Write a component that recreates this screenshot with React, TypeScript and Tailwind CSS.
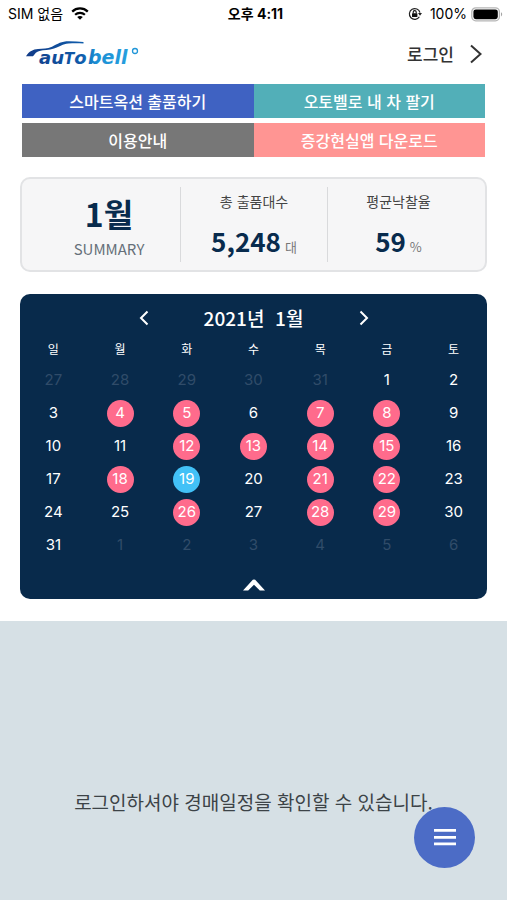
import * as React from "react";
import clsx from "clsx";

type DayKind = "plain" | "muted" | "auction" | "today";

interface Day {
  date: number;
  kind: DayKind;
}

const WEEKDAYS = ["일", "월", "화", "수", "목", "금", "토"];

const AUCTION_DATES = [4, 5, 7, 8, 12, 13, 14, 15, 18, 21, 22, 26, 28, 29];
const TODAY = 19;

const DAY_STYLES: Record<DayKind, string> = {
  plain: "text-white",
  muted: "text-[#304c69]",
  auction: "bg-[#ff6b8c] text-white",
  today: "bg-[#42c1f7] text-white",
};

const LINKS = [
  { label: "스마트옥션 출품하기", color: "bg-[#3f62c2]" },
  { label: "오토벨로 내 차 팔기", color: "bg-[#52afb8]" },
  { label: "이용안내", color: "bg-[#777777]" },
  { label: "증강현실앱 다운로드", color: "bg-[#ff9593]" },
];

/** Six weeks, starting on Sunday 27 December 2020. */
function buildWeeks(): Day[][] {
  return Array.from({ length: 6 }, (_, week) =>
    Array.from({ length: 7 }, (_, weekday) => {
      const offset = week * 7 + weekday - 4;
      if (offset < 1) return { date: offset + 31, kind: "muted" };
      if (offset > 31) return { date: offset - 31, kind: "muted" };
      if (offset === TODAY) return { date: offset, kind: "today" };
      return {
        date: offset,
        kind: AUCTION_DATES.includes(offset) ? "auction" : "plain",
      };
    }),
  );
}

function WifiIcon() {
  return (
    <svg width="18" height="14" viewBox="0 0 18 14" fill="none" aria-hidden="true">
      <path d="M1.2 4.6C5.600.4 12.400.4 16.800 4.600" stroke="#000" strokeWidth="2.3" />
      <path d="M4.1 7.800c2.800-2.600 7-2.600 9.800 0" stroke="#000" strokeWidth="2.2" />
      <path d="M9 12.800 6.200 10c1.600-1.400 4-1.400 5.600 0z" fill="#000" />
    </svg>
  );
}

function RotationLockIcon() {
  return (
    <svg width="14" height="14" viewBox="0 0 14 14" fill="none" aria-hidden="true">
      <path d="M11.4 9.8A5.4 5.4 0 1 1 12 5.6" stroke="#222" strokeWidth="1.2" />
      <path d="M10 6h4l-2 2.8z" fill="#222" />
      <rect x="4" y="6.2" width="5.4" height="3.8" rx="0.5" fill="#111" />
      <path d="M5.2 6.4V5.1a1.5 1.5 0 0 1 3 0v1.3" stroke="#111" strokeWidth="1.1" />
    </svg>
  );
}

function BatteryIcon() {
  return (
    <svg width="32" height="15" viewBox="0 0 32 15" fill="none" aria-hidden="true">
      <rect x="0.8" y="0.8" width="27.6" height="13" rx="4" stroke="#b5b5b5" strokeWidth="1.3" />
      <rect x="2.4" y="2.4" width="24.4" height="9.8" rx="2.4" fill="#000" />
      <path d="M30 5.2c1.6.6 1.6 3.6 0 4.2z" fill="#a5a5a5" />
    </svg>
  );
}

function StatusBar() {
  return (
    <div className="grid h-7 grid-cols-3 items-center pr-1 pl-2 font-['Inter','Noto_Sans_CJK_KR',sans-serif] text-sm text-black">
      <div className="flex items-center gap-2">
        <span>SIM 없음</span>
        <WifiIcon />
      </div>
      <span className="text-center font-bold">오후 4:11</span>
      <div className="flex items-center justify-end gap-1">
        <RotationLockIcon />
        <span className="ml-1">100%</span>
        <BatteryIcon />
      </div>
    </div>
  );
}

function Logo() {
  return (
    <svg width="116" height="26" viewBox="0 0 116 26" role="img" aria-label="autobell">
      <defs>
        <linearGradient id="logo-fill" x1="0" y1="0" x2="116" y2="0" gradientUnits="userSpaceOnUse">
          <stop offset="0" stopColor="#123a86" />
          <stop offset="0.5" stopColor="#0f5cab" />
          <stop offset="0.62" stopColor="#1b8fd4" />
          <stop offset="1" stopColor="#2aa5e2" />
        </linearGradient>
      </defs>
      <path
        d="M2 15.2C5 10.3 9 8.4 14 8c5-.4 9-.3 14-2.3C34 2.8 37 .3 45 .3c5 0 10 .2 14.5.6v1.6C54 2.2 49 2.200 44.500 2.600c-6 .5-8.500 3-14.500 5-5 1.800-10 1.500-14.500 2.300-3 .6-4.500 2.600-6.500 5.300z"
        fill="url(#logo-fill)"
      />
      <g
        fontSize="18"
        fontStyle="italic"
        fontWeight="700"
        fill="url(#logo-fill)"
        className="font-['DejaVu_Sans',sans-serif]"
      >
        <text x="15" y="23">
          au<tspan fontSize="15">T</tspan>o
        </text>
        <text x="64" y="23" fontSize="19">
          bell
        </text>
      </g>
      <circle cx="111" cy="10" r="2.5" fill="none" stroke="#2196d8" strokeWidth="1.3" />
    </svg>
  );
}

function Header() {
  return (
    <header className="flex h-14 items-center justify-between px-6">
      <a href="#home" className="pb-1">
        <Logo />
      </a>
      <a
        href="#login"
        className="flex items-center gap-4 pb-1 text-[17px] font-medium text-[#333]"
      >
        로그인
        <svg width="13" height="20" viewBox="0 0 13 20" fill="none" aria-hidden="true">
          <path d="M1 1.5 10.5 10 1 18.5" stroke="#333" strokeWidth="2" />
        </svg>
      </a>
    </header>
  );
}

function QuickLinks() {
  return (
    <nav className="grid grid-cols-2 gap-y-[5px] px-[22px]">
      {LINKS.map(({ label, color }) => (
        <a
          key={label}
          href="#link"
          className={clsx(
            "flex h-[34px] items-center justify-center text-base font-medium text-white",
            color,
          )}
        >
          {label}
        </a>
      ))}
    </nav>
  );
}

interface StatProps {
  label: string;
  value: string;
  unit: string;
}

function Stat({ label, value, unit }: StatProps) {
  return (
    <div className="my-2 flex flex-col items-center gap-3 border-l border-[#d9dadc] pt-1">
      <span className="text-sm leading-5 text-[#444]">{label}</span>
      <span className="flex items-baseline gap-1">
        <strong className="text-[26px] leading-9 font-bold text-[#082b4d]">{value}</strong>
        <span className="text-[13px] text-[#777]">{unit}</span>
      </span>
    </div>
  );
}

function Summary() {
  return (
    <section className="mx-5 mt-5 grid h-[95px] grid-cols-[158fr_147fr_142fr] rounded-[10px] border-2 border-[#e2e3e5] bg-[#f6f6f7] pr-4">
      <div className="flex flex-col items-center pt-3 pl-4">
        <h1 className="text-[32px] leading-11 font-bold text-[#082b4d]">1월</h1>
        <span className="text-[15px] leading-7 text-[#66707a]">SUMMARY</span>
      </div>
      <Stat label="총 출품대수" value="5,248" unit="대" />
      <Stat label="평균낙찰율" value="59" unit="%" />
    </section>
  );
}

function Calendar() {
  const weeks = buildWeeks();
  const [open, setOpen] = React.useState(true);

  return (
    <section className="mx-5 mt-[22px] flex flex-col rounded-[10px] bg-[#082a4b] pt-2 text-white">
      <div className="flex h-8 items-center justify-center">
        <button type="button" aria-label="이전 달" className="cursor-pointer">
          <svg width="10" height="16" viewBox="0 0 10 16" fill="none" aria-hidden="true">
            <path d="M8.5 1.5 2 8l6.5 6.5" stroke="#fff" strokeWidth="2" />
          </svg>
        </button>
        <h2 className="w-[210px] text-center text-[19px] font-medium whitespace-pre">
          {"2021년  1월"}
        </h2>
        <button type="button" aria-label="다음 달" className="cursor-pointer">
          <svg width="10" height="16" viewBox="0 0 10 16" fill="none" aria-hidden="true">
            <path d="M1.5 1.5 8 8l-6.5 6.5" stroke="#fff" strokeWidth="2" />
          </svg>
        </button>
      </div>

      <table className="w-full table-fixed text-center">
        <thead>
          <tr className="h-[30px] text-xs">
            {WEEKDAYS.map((name) => (
              <th key={name} scope="col" className="p-0 font-normal">
                {name}
              </th>
            ))}
          </tr>
        </thead>
        {open && (
          <tbody className="font-['Inter','Noto_Sans_CJK_KR',sans-serif] text-[15px]">
            {weeks.map((week, index) => (
              <tr key={index} className="h-[33px]">
                {week.map(({ date, kind }) => (
                  <td key={date} className="p-0">
                    <span
                      className={clsx(
                        "mx-auto flex size-[27px] items-center justify-center rounded-full",
                        DAY_STYLES[kind],
                      )}
                    >
                      {date}
                    </span>
                  </td>
                ))}
              </tr>
            ))}
          </tbody>
        )}
      </table>

      <button
        type="button"
        aria-label="달력 접기"
        aria-expanded={open}
        onClick={() => setOpen((value) => !value)}
        className="flex h-[37px] cursor-pointer items-center justify-center pt-2"
      >
        <svg width="22" height="12" viewBox="0 0 22 12" aria-hidden="true">
          <path d="M0 11.5 9.8.8q1.2-.8 2.4 0L22 11.5h-5.2L11 5.8 5.2 11.5z" fill="#fff" />
        </svg>
      </button>
    </section>
  );
}

export default function App() {
  return (
    <div
      lang="ko"
      className="flex min-h-screen flex-col bg-white font-['Noto_Sans_CJK_KR',sans-serif]"
    >
      <StatusBar />
      <Header />
      <main className="flex grow flex-col">
        <QuickLinks />
        <Summary />
        <Calendar />
        <section className="mt-[22px] grow bg-[#d6e0e5] px-4 pt-[167px] pb-20">
          <p className="text-center text-[19px] leading-7 text-[#3c4347]">
            로그인하셔야 경매일정을 확인할 수 있습니다.
          </p>
        </section>
      </main>

      <button
        type="button"
        aria-label="메뉴"
        className="fixed right-8 bottom-8 flex size-[61px] cursor-pointer items-center justify-center rounded-full bg-[#4c6cc6]"
      >
        <svg width="22" height="17" viewBox="0 0 22 17" fill="#fff" aria-hidden="true">
          <path d="M0 0h22v2.8H0zM0 7h22v2.8H0zM0 13.5h22v2.8H0z" />
        </svg>
      </button>
    </div>
  );
}
